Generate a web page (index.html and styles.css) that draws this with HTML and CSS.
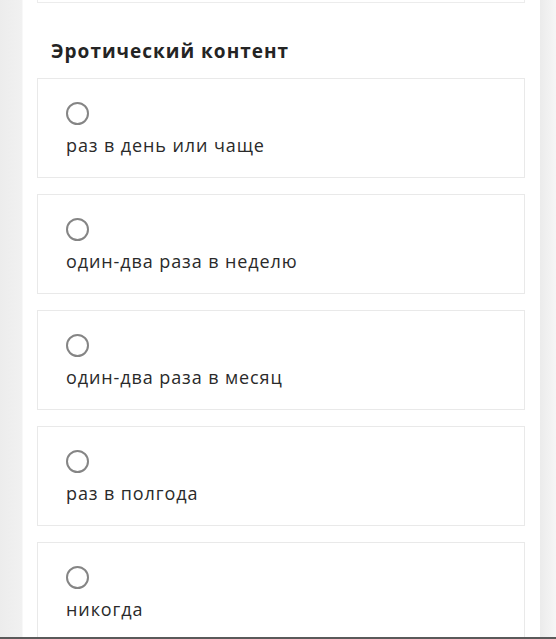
FILE: index.html
```html
<!DOCTYPE html>
<html lang="ru">
<head>
<meta charset="utf-8">
<link rel="stylesheet" href="styles.css">
</head>
<body>
<div class="screen">
  <div class="page">
    <div class="panel">
      <div class="prev-card"></div>
      <h2 class="title">Эротический контент</h2>
      <div class="options">
        <label class="option"><span class="radio"></span><span class="label">раз в день или чаще</span></label>
        <label class="option"><span class="radio"></span><span class="label">один-два раза в неделю</span></label>
        <label class="option"><span class="radio"></span><span class="label">один-два раза в месяц</span></label>
        <label class="option"><span class="radio"></span><span class="label">раз в полгода</span></label>
        <label class="option"><span class="radio"></span><span class="label">никогда</span></label>
      </div>
    </div>
  </div>
  <div class="bottom-line"></div>
</div>
</body>
</html>
```
FILE: styles.css
```css
html, body {
  margin: 0;
  padding: 0;
}
body {
  background: #efefef;
  font-family: "Open Sans", "Noto Sans", sans-serif;
  color: #2b2b2b;
}
.screen {
  height: 639px;
  display: flex;
  flex-direction: column;
  overflow: hidden;
}
.page {
  flex: 1;
  overflow: hidden;
  display: flex;
  background: linear-gradient(to right, #ececec 0, #f1f1f1 22px, #fff 23px, #fff 539px, #ebebeb 540px, #f6f6f6 556px);
}
.panel {
  margin-left: 23px;
  width: 517px;
  background: #fff;
  padding-left: 14px;
  box-sizing: border-box;
}
.prev-card {
  width: 488px;
  height: 3px;
  border: 1px solid #ececec;
  border-top: none;
  box-sizing: border-box;
}
.title {
  margin: 0;
  padding: 36px 0 0 14px;
  height: 39px;
  font-size: 19px;
  line-height: 24px;
  font-weight: 700;
  color: #242424;
  letter-spacing: 1px;
}
.options {
  display: flex;
  flex-direction: column;
  gap: 16px;
}
.option {
  width: 488px;
  height: 100px;
  box-sizing: border-box;
  border: 1px solid #e9e9e9;
  padding: 23px 0 0 28px;
  display: flex;
  flex-direction: column;
  align-items: flex-start;
  gap: 8px;
  flex-shrink: 0;
}
.radio {
  width: 23px;
  height: 23px;
  box-sizing: border-box;
  border: 2px solid #858585;
  border-radius: 50%;
}
.label {
  font-size: 18px;
  line-height: 24px;
  font-weight: 500;
  color: #2a2a2a;
  letter-spacing: 0.9px;
}
.bottom-line {
  height: 2px;
  background: #5a5a5a;
  flex-shrink: 0;
}
```
